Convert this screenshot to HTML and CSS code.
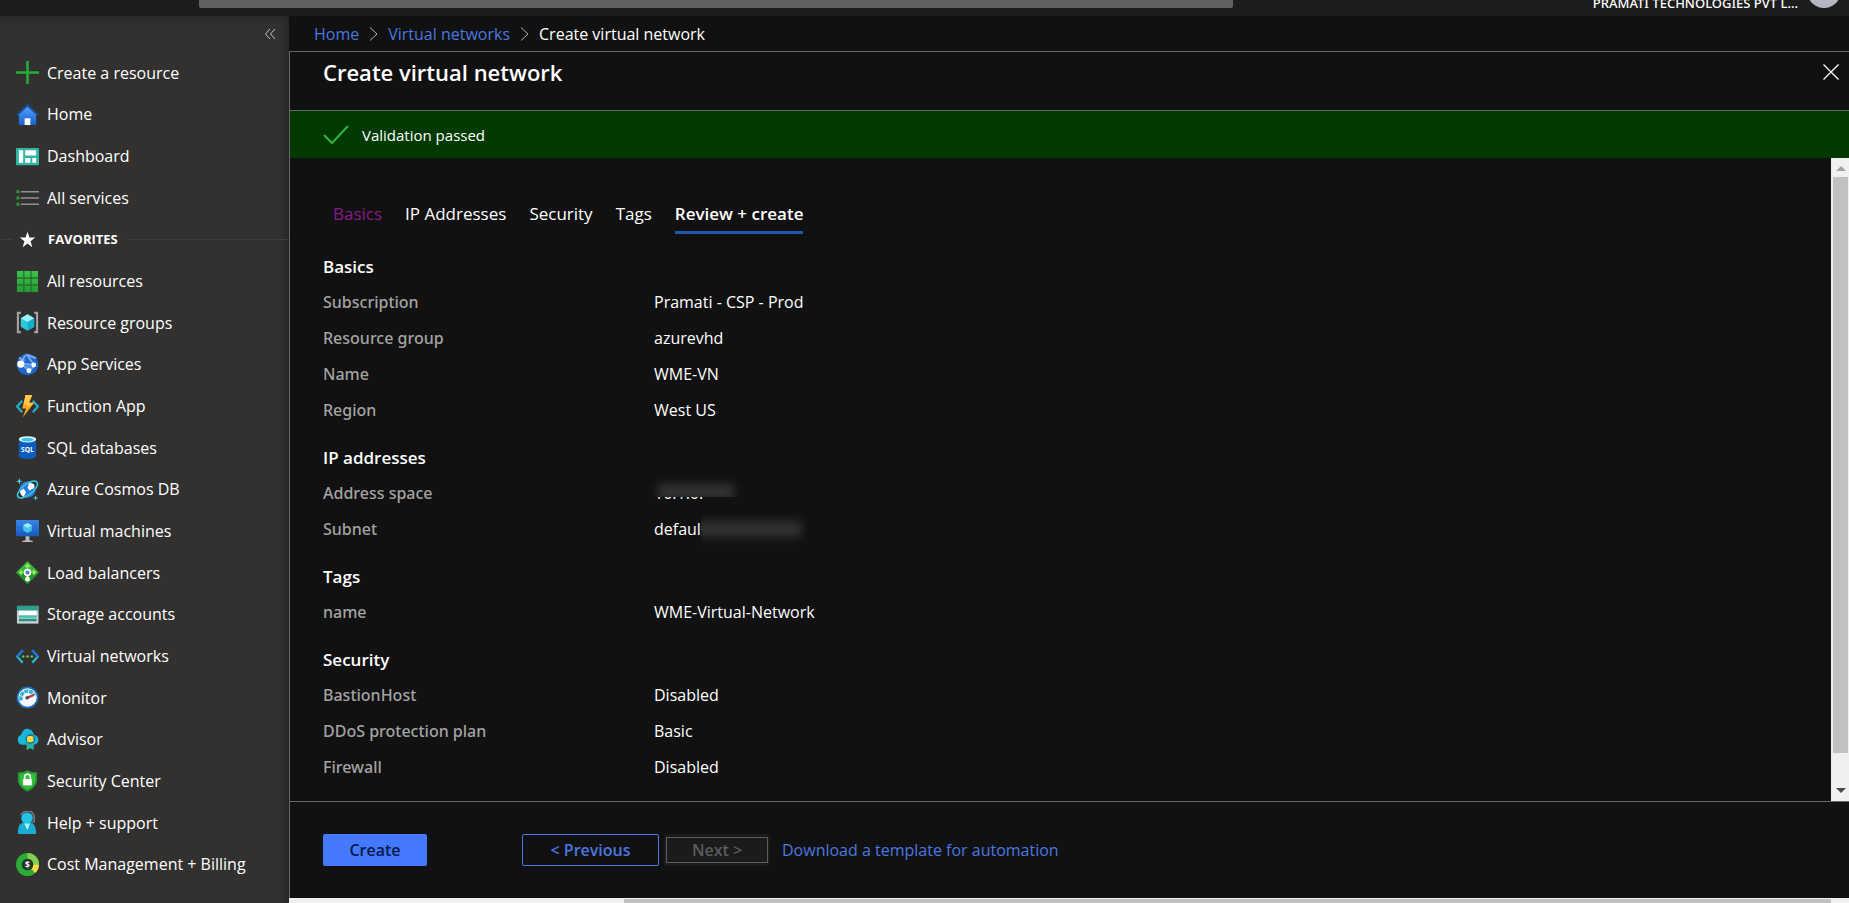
FILE: index.html
```html
<!DOCTYPE html>
<html lang="en">
<head>
<meta charset="utf-8">
<title>Create virtual network</title>
<link rel="stylesheet" href="styles.css">
</head>
<body>
<div class="app">
  <header class="topbar">
    <input class="search" type="text" aria-label="Search resources">
    <div class="account"><span class="tenant">PRAMATI TECHNOLOGIES PVT L...</span><span class="avatar"></span></div>
  </header>
  <div class="body">
    <nav class="sidebar" aria-label="Portal menu">
      <button class="collapse" aria-label="Collapse menu"><svg width="12" height="12" viewBox="0 0 12 12" fill="none" stroke="#c8c6c4"><path d="M6 1L1.5 6L6 11M11 1L6.500 6L11 11"/></svg></button>
      <ul class="menu">
        <li><a href="#"><svg class="ico" viewBox="0 0 24 24"><path d="M12 0v24M0 12h24" stroke="#22b03a" stroke-width="2.600"/></svg>Create a resource</a></li>
        <li><a href="#"><svg class="ico" viewBox="0 0 24 24"><defs><linearGradient id="g1" x2="0" y2="1"><stop stop-color="#5aa0f5"/><stop offset="1" stop-color="#1563d2"/></linearGradient></defs><path d="M3 10L12 3l9 7v13H3z" fill="url(#g1)"/><path d="M0 12.500L12 .5l12 12-1.500 1L12 4 1.500 13.500z" fill="#164f9e"/><path d="M9 16h6v7H9z" fill="#fff"/></svg>Home</a></li>
        <li><a href="#"><svg class="ico" viewBox="0 0 24 24"><rect y="3" width="24" height="18" rx="1" fill="#2fb7a4"/><path d="M3 5.500h4.500v13H3zM9.500 5.500H21V11H9.500zM9.500 13.500H15v5H9.500zM17 13.500h4v5h-4z" fill="#fff"/></svg>Dashboard</a></li>
        <li><a href="#"><svg class="ico" viewBox="0 0 24 24"><path d="M5 6h19M5 12.500h19M5 19h19" stroke="#929190" stroke-width="1.700"/><path d="M.5 4.500h3v3h-3zM.5 11h3v3h-3zM.5 17.500h3v3h-3z" fill="#279c3c"/></svg>All services</a></li>
        <li class="favorites"><svg class="ico" viewBox="0 0 24 24"><path d="M12 4l2 6h6l-4.800 3.700L17 20l-5-3.700L7 20l1.800-6.300L4 10h6z" fill="#fff"/></svg><span>FAVORITES</span></li>
        <li><a href="#"><svg class="ico" viewBox="0 0 24 24"><defs><linearGradient id="g2" x2="0" y2="1"><stop stop-color="#3fc04a"/><stop offset="1" stop-color="#259a34"/></linearGradient></defs><rect x="1" y="1" width="22" height="22" fill="url(#g2)"/><path d="M8.200 1v22M15.700 1v22M1 8.500h22M1 15.800h22" stroke="#23652b" stroke-width="1.100"/></svg>All resources</a></li>
        <li><a href="#"><svg class="ico" viewBox="0 0 24 24"><path d="M5 2H2v20h3M19 2h3v20h-3" fill="none" stroke="#a3a2a1" stroke-width="2.200"/><path d="M12 3.500l7 4v9l-7 4-7-4v-9z" fill="#2cc7dd"/><path d="M12 3.500l7 4-7 4-7-4z" fill="#9bf1fa"/><path d="M12 11.500l7-4v9l-7 4z" fill="#15afcc"/></svg>Resource groups</a></li>
        <li><a href="#"><svg class="ico" viewBox="0 0 24 24"><circle cx="12" cy="12" r="11.200" fill="#1d66cb"/><path d="M5 11L9.500 2.500M5 11l14 1.500M5 11l9 8 5-6.500L12 3M3 5l6 3M10 1.500l11 4" stroke="#79aaf0" stroke-width="2" fill="none"/><path d="M6 11l10 2-2 5z" fill="#5691e6"/><circle cx="5" cy="11.500" r="3.800" fill="#fff"/><circle cx="18.500" cy="12.500" r="2.500" fill="#fff"/><circle cx="13.500" cy="18.500" r="2.500" fill="#fff"/></svg>App Services</a></li>
        <li><a href="#"><svg class="ico" viewBox="0 0 24 24"><path d="M6.500 6L1.200 12l5.300 6M17.500 6l5.300 6-5.300 6" fill="none" stroke="#29a9c4" stroke-width="2.400"/><path d="M10 0h7l-3.500 8H19L7 23.500 10.500 14H6.500z" fill="#f9a825"/><path d="M10 0h7l-3.500 8H19L13 12l-2-2H8z" fill="#ffca45"/></svg>Function App</a></li>
        <li><a href="#"><svg class="ico" viewBox="0 0 24 24"><path d="M3 3.500h18v17c0 4.500-18 4.500-18 0z" fill="#0c5dc0"/><ellipse cx="12" cy="3.500" rx="9" ry="3.300" fill="#e6f8fd"/><ellipse cx="12" cy="3.700" rx="6.500" ry="2" fill="#36c5e8"/><text x="12" y="16.500" class="sql">SQL</text></svg>SQL databases</a></li>
        <li><a href="#"><svg class="ico" viewBox="0 0 24 24"><circle cx="12" cy="12" r="8.500" fill="#2779dd"/><ellipse cx="12" cy="12" rx="12.500" ry="5.500" transform="rotate(-38 12 12)" fill="none" stroke="#38c0da" stroke-width="1.700"/><path d="M4 14l4-3 2.500 4-2.500 4.500c-2-1-3.500-3-4-5.500zM12 10l2-5 5 1.500v4l-5 2.500z" fill="#fff"/><path d="M3.500 0l.8 2.700L7 3.500l-2.700.8L3.500 7l-.8-2.700L0 3.500l2.700-.8zM20.500 18l.7 2 2.300.8-2.300.7-.7 2.300-.7-2.300-2.300-.7 2.300-.8z" fill="#4bd4df"/></svg>Azure Cosmos DB</a></li>
        <li><a href="#"><svg class="ico" viewBox="0 0 24 24"><defs><linearGradient id="g3" x2="0" y2="1"><stop stop-color="#3b83e6"/><stop offset="1" stop-color="#1559bd"/></linearGradient></defs><rect width="24" height="17" fill="url(#g3)"/><path d="M12 3l4.500 2.500v5.500L12 13.500 7.500 11V5.500z" fill="#46c5ed"/><path d="M12 3l4.500 2.500L12 8 7.500 5.500z" fill="#9bebfa"/><path d="M10 17h4v4l3.500 1v1h-11v-1l3.500-1z" fill="#b9bcbf"/></svg>Virtual machines</a></li>
        <li><a href="#"><svg class="ico" viewBox="0 0 24 24"><path d="M12 0l12 12-12 12L0 12z" fill="#37b837"/><path d="M12 24L0 12h24z" fill="#239626"/><path d="M12 3.500V18M3.500 12h17M12 3l-2.500 3h5zM3 12l3-2.500v5zM21 12l-3-2.500v5z" stroke="#9be66d" stroke-width="1" fill="#9be66d"/><circle cx="12" cy="12" r="3" fill="#527bb3" stroke="#fff" stroke-width="1.800"/><circle cx="12" cy="19" r="2.500" fill="#fff"/><path d="M12 14.500V19" stroke="#fff" stroke-width="2"/></svg>Load balancers</a></li>
        <li><a href="#"><svg class="ico" viewBox="0 0 24 24"><rect x="1" y="3" width="22.500" height="18.500" fill="#c8d0d1"/><path d="M1 3h22.500v5H1z" fill="#2ba08f"/><path d="M3 8h18.500v4.500H3z" fill="#fff"/><path d="M3 13h18.500v2.500H3z" fill="#42c3ae"/><path d="M3 16.500h18.500v2.500H3z" fill="#238f80"/></svg>Storage accounts</a></li>
        <li><a href="#"><svg class="ico" viewBox="0 0 24 24"><path d="M7 5.500L1.300 12 7 18.500" fill="none" stroke="#2ab4d4" stroke-width="2.300"/><path d="M17 5.500l5.700 6.500-5.700 6.500" fill="none" stroke="#2ab4d4" stroke-width="2.300"/><path d="M7 5.500L1.300 12M17 5.500l5.700 6.500" stroke="#1872cb" stroke-width="2.300"/><g fill="#61c440"><circle cx="7.500" cy="12" r="1.400"/><circle cx="12" cy="12" r="1.400"/><circle cx="16.500" cy="12" r="1.400"/></g></svg>Virtual networks</a></li>
        <li><a href="#"><svg class="ico" viewBox="0 0 24 24"><circle cx="12" cy="12" r="10.500" fill="#f2f8fc" stroke="#1f6ebb" stroke-width="1.800"/><path d="M5.500 15A7 7 0 1 1 19 10" fill="none" stroke="#2fb4d8" stroke-width="3.600" stroke-dasharray="4.200 .8"/><path d="M11 11l8-3v2.500l-7 3z" fill="#c03c45"/><circle cx="11.500" cy="12.500" r="1.700" fill="#3b4560"/></svg>Monitor</a></li>
        <li><a href="#"><svg class="ico" viewBox="0 0 24 24"><path d="M6 17.500a5.500 5.500 0 0 1-.5-10.500C7 2 10 .5 13 1c3.500.5 5 3 5.500 6 7 1 6.500 10.500-.5 10.500z" fill="#17b6dc"/><path d="M11 13h7.500v10l-3.500-2-4 2z" fill="#25b49f"/><circle cx="15" cy="11.500" r="5" fill="#1c7088"/><rect x="11.500" y="8.300" width="6.800" height="6.500" rx="2" fill="#ffd54c"/></svg>Advisor</a></li>
        <li><a href="#"><svg class="ico" viewBox="0 0 24 24"><path d="M12 1c3 2 6 2.500 10 2.500V11c0 6-4 9.500-10 12.500C6 20.500 2 17 2 11V3.500C6 3.500 9 3 12 1z" fill="#229b34"/><path d="M12 3c2.500 1.500 5 2 8 2v6c0 5-3 8-8 10.500C7 19 4 16 4 11V5c3 0 5.500-.5 8-2z" fill="#37bd3c"/><path d="M7.500 10.500h9v6.500h-9z" fill="#fff"/><path d="M9 11V8.500a3 3 0 0 1 6 0V11" fill="none" stroke="#fff" stroke-width="1.600"/></svg>Security Center</a></li>
        <li><a href="#"><svg class="ico" viewBox="0 0 24 24"><path d="M5 4C9-1.500 18-1 19 6v5l-2 1" fill="none" stroke="#767f83" stroke-width="1.600"/><path d="M2 24c0-7 1-11 6-12h7c4 1 6 5 6 12z" fill="#16aed2"/><circle cx="11.500" cy="7.500" r="6" fill="#21c4e6"/><path d="M8.500 13h6L12 20z" fill="#b6eff7"/></svg>Help + support</a></li>
        <li><a href="#"><svg class="ico" viewBox="0 0 24 24"><circle cx="12" cy="12" r="9" fill="none" stroke="#2cad38" stroke-width="6"/><path d="M12 3a9 9 0 0 1 9 9" fill="none" stroke="#82cf52" stroke-width="6"/><path d="M21 12a9 9 0 0 1-3 6.700" fill="none" stroke="#f8dc42" stroke-width="6"/><circle cx="12" cy="12" r="6" fill="#26352a"/><text x="12" y="15.500" class="dollar">$</text></svg>Cost Management + Billing</a></li>
      </ul>
    </nav>
    <main class="main">
      <nav class="crumbs" aria-label="Breadcrumb">
        <a href="#">Home</a>
        <svg width="9" height="14" viewBox="0 0 9 14" fill="none" stroke="#b5b5b5"><path d="M1 .5L8 7l-7 6.500"/></svg>
        <a href="#">Virtual networks</a>
        <svg width="9" height="14" viewBox="0 0 9 14" fill="none" stroke="#b5b5b5"><path d="M1 .5L8 7l-7 6.500"/></svg>
        <span>Create virtual network</span>
      </nav>
      <div class="blade">
        <div class="title">
          <h1>Create virtual network</h1>
          <button class="close" aria-label="Close"><svg width="16" height="16" viewBox="0 0 16 16" stroke="#fff" stroke-width="1.300"><path d="M.5.5l15 15M15.500.5l-15 15"/></svg></button>
        </div>
        <div class="status"><svg width="26" height="20" viewBox="0 0 26 20" fill="none" stroke="#2db53f" stroke-width="2"><path d="M1 10l8 8L25 1"/></svg>Validation passed</div>
        <div class="scroller">
          <div class="content">
            <div class="tabs" role="tablist">
              <button class="tab visited" role="tab">Basics</button>
              <button class="tab" role="tab">IP Addresses</button>
              <button class="tab" role="tab">Security</button>
              <button class="tab" role="tab">Tags</button>
              <button class="tab active" role="tab" aria-selected="true">Review + create</button>
            </div>
            <section class="group">
              <h2>Basics</h2>
              <dl>
                <dt>Subscription</dt><dd>Pramati - CSP - Prod</dd>
                <dt>Resource group</dt><dd>azurevhd</dd>
                <dt>Name</dt><dd>WME-VN</dd>
                <dt>Region</dt><dd>West US</dd>
              </dl>
            </section>
            <section class="group">
              <h2>IP addresses</h2>
              <dl>
                <dt>Address space</dt><dd class="redacted">10.1.0.<span class="mask mask-top"><i class="smudge"></i></span></dd>
                <dt>Subnet</dt><dd class="redacted">defaul<span class="mask mask-end"><i class="smudge"></i></span></dd>
              </dl>
            </section>
            <section class="group">
              <h2>Tags</h2>
              <dl><dt>name</dt><dd>WME-Virtual-Network</dd></dl>
            </section>
            <section class="group">
              <h2>Security</h2>
              <dl>
                <dt>BastionHost</dt><dd>Disabled</dd>
                <dt>DDoS protection plan</dt><dd>Basic</dd>
                <dt>Firewall</dt><dd>Disabled</dd>
              </dl>
            </section>
          </div>
          <div class="vbar"><span class="arrow up"></span><span class="vthumb"></span><span class="arrow down"></span></div>
        </div>
        <footer class="actions">
          <button class="btn primary">Create</button>
          <button class="btn outline">&lt; Previous</button>
          <button class="btn off" disabled><span>Next &gt;</span></button>
          <a href="#">Download a template for automation</a>
        </footer>
      </div>
      <div class="hbar"><span class="hthumb"></span></div>
    </main>
  </div>
</div>
</body>
</html>
```

FILE: styles.css
```css
* { box-sizing: border-box; }
body {
  margin: 0;
  background: #111;
  color: #fff;
  font: 16px/24px "Open Sans", "Noto Sans", sans-serif;
}
button { font: inherit; color: inherit; background: none; border: 0; padding: 0; }
a { color: #4a78e0; text-decoration: none; }
ul, dl, dd, h1, h2 { margin: 0; padding: 0; }

.app { display: flex; flex-direction: column; height: 100vh; overflow: hidden; }

.topbar {
  display: flex;
  justify-content: space-between;
  align-items: flex-end;
  height: 16px;
  flex: none;
  padding: 0 8px 8px 199px;
  background: #1c1c1c;
}
.search { width: 63%; height: 24px; border: 0; border-radius: 2px; background: #62605e; }
.account { display: flex; align-items: flex-end; gap: 9px; }
.tenant { font: 500 13px/16px "Noto Sans", "Open Sans", sans-serif; margin-bottom: -3px; }
.avatar { width: 34px; height: 34px; border-radius: 50%; background: #b4b7c1; }

.body { display: flex; flex: 1; min-height: 0; }

.sidebar {
  display: flex;
  flex-direction: column;
  width: 289px;
  flex: none;
  padding-bottom: 18px;
  background: #323130;
  box-shadow: inset -8px 0 8px -6px #222, inset 0 8px 8px -6px #282726;
}
.collapse { align-self: flex-end; height: 36px; padding: 0 13px; line-height: 0; flex: none; }
.menu { display: flex; flex-direction: column; flex: 1; list-style: none; }
.menu li { display: flex; flex: 1; align-items: center; }
.menu a { display: flex; align-items: center; gap: 8px; padding-left: 16px; color: #fff; }
.ico { width: 23px; height: 23px; flex: none; }
.sql { font: bold 7px "Open Sans", sans-serif; fill: #fff; text-anchor: middle; }
.dollar { font: bold 9px "Open Sans", sans-serif; fill: #fff; text-anchor: middle; }
.menu .favorites { gap: 9px; font-size: 13px; font-weight: 700; }
.favorites::before { content: ""; width: 12px; height: 1px; margin-right: -5px; background: #3e3d3c; }
.favorites::after { content: ""; flex: 1; height: 1px; background: #3e3d3c; }

.main { display: flex; flex-direction: column; flex: 1; min-width: 0; }
.crumbs { display: flex; align-items: center; gap: 10px; height: 35px; padding-left: 25px; flex: none; }
.blade {
  display: flex;
  flex-direction: column;
  flex: 1;
  min-height: 0;
  border: 1px solid #666;
  border-width: 1px 0 0 1px;
}
.title {
  display: flex;
  justify-content: space-between;
  align-items: flex-start;
  flex: none;
  padding: 4px 10px 22px 33px;
  border-bottom: 1px solid #5d705d;
}
h1 { font-size: 22px; line-height: 32px; font-weight: 600; }
.close { line-height: 0; padding: 8px 0; }
.status {
  display: flex;
  align-items: center;
  gap: 13px;
  height: 47px;
  flex: none;
  padding-left: 33px;
  background: #003a00;
  font-size: 15px;
}

.scroller { display: flex; flex: 1; min-height: 0; }
.content { flex: 1; padding: 43px 33px 0; overflow: hidden; }
.tabs { display: flex; gap: 23px; padding-left: 10px; margin-bottom: 16px; }
.tab { padding-bottom: 5px; border-bottom: 3px solid transparent; font-size: 17px; line-height: 25px; }
.visited { color: #8a1a8a; }
.active { font-weight: 600; border-color: #1b5aaf; }

.group { margin-bottom: 13px; }
h2 { font-size: 17px; line-height: 34px; font-weight: 600; }
dl { display: grid; grid-template-columns: 331px 1fr; line-height: 36px; }
dt { color: #a3a3a3; font-family: "Noto Sans", "Open Sans", sans-serif; font-weight: 500; }
.redacted { position: relative; }
.mask { position: absolute; background: #111; overflow: hidden; }
.mask-top { left: -10px; top: 0; width: 120px; height: 22px; }
.mask-end { left: 47px; top: 0; width: 120px; height: 36px; }
.smudge { position: absolute; background: #333; filter: blur(5px); }
.mask-top .smudge { left: 14px; top: 9px; width: 76px; height: 16px; }
.mask-end .smudge { left: -4px; top: 10px; width: 104px; height: 16px; }

.vbar {
  display: flex;
  flex-direction: column;
  align-items: center;
  width: 18px;
  padding: 8px 1px 8px 2px;
  background: #f0f0f0;
}
.arrow { border: 5px solid transparent; border-width: 0 5px; flex: none; }
.up { border-bottom: 5px solid #a3a3a3; }
.down { border-top: 5px solid #4a4a4a; }
.vthumb { width: 100%; flex: 1; margin: 6px 0 35px; background: #c1c1c1; }

.actions {
  display: flex;
  align-items: center;
  height: 97px;
  flex: none;
  padding-left: 33px;
  border-top: 1px solid #666;
}
.btn { height: 32px; font-weight: 600; border-radius: 2px; }
.primary { width: 104px; margin-right: 95px; background: #4378ff; color: #0a1848; }
.outline { width: 137px; margin-right: 5px; border: 1px solid #4a78e0; color: #4a78e0; }
.off { width: 106px; margin-right: 12px; padding: 3px 2px; background: #1b1b1b; color: #5c5c5c; }
.off span { display: block; border: 1px solid #5c5c5c; height: 26px; }

.hbar { height: 5px; flex: none; padding: 1px 18px 0 335px; background: #f0f0f0; }
.hthumb { display: block; height: 4px; background: #c1c1c1; }
```
